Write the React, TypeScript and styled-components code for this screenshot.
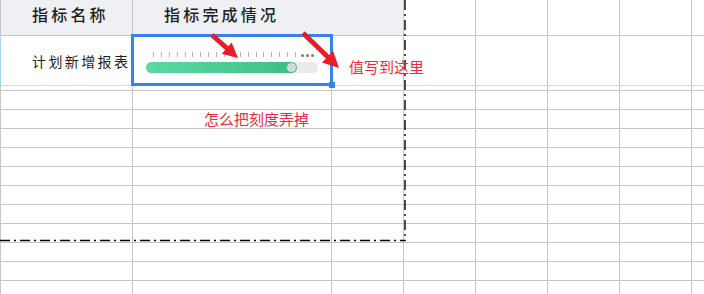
import styled, { createGlobalStyle } from "styled-components";

const GlobalStyle = createGlobalStyle`
  html, body {
    margin: 0;
    padding: 0;
    background: #fff;
    overflow: hidden;
  }
  body {
    font-family: "Noto Sans CJK SC", "Noto Sans", sans-serif;
  }
`;

const EXTRA_COLS = 5;
const TOTAL_COLS = 8;
const BODY_ROWS = 11;
const TICKS = 19;
const PROGRESS = 88;

type Pt = [number, number];

// 箭头多边形 (尾 -> 尖)
const arrowPoints = (from: Pt, to: Pt, headLen: number, headHalf: number, shaftHalf: number) => {
  const dx = to[0] - from[0];
  const dy = to[1] - from[1];
  const len = Math.hypot(dx, dy);
  const ux = dx / len;
  const uy = dy / len;
  const nx = -uy;
  const ny = ux;
  const bx = to[0] - ux * headLen;
  const by = to[1] - uy * headLen;
  const p = (x: number, y: number) => `${x.toFixed(1)},${y.toFixed(1)}`;
  return [
    p(from[0] + nx * shaftHalf, from[1] + ny * shaftHalf),
    p(bx + nx * shaftHalf, by + ny * shaftHalf),
    p(bx + nx * headHalf, by + ny * headHalf),
    p(to[0], to[1]),
    p(bx - nx * headHalf, by - ny * headHalf),
    p(bx - nx * shaftHalf, by - ny * shaftHalf),
    p(from[0] - nx * shaftHalf, from[1] - ny * shaftHalf),
  ].join(" ");
};

const App = () => {
  return (
    <Page>
      <GlobalStyle />
      <Sheet>
        <Cell $first $head>
          <HeadText>指标名称</HeadText>
        </Cell>
        <Cell $head $span={2}>
          <HeadText>指标完成情况</HeadText>
        </Cell>
        {Array.from({ length: EXTRA_COLS }).map((_, i) => (
          <Cell key={`h${i}`} />
        ))}

        <Cell $first $marked $soft>
          <NameText>计划新增报表</NameText>
        </Cell>
        <Cell $soft>
          <ProgressBox>
            <Ticks>
              {Array.from({ length: TICKS }).map((_, i) => (
                <Tick key={i} />
              ))}
              <Dots>
                <Dot />
                <Dot />
                <Dot />
              </Dots>
            </Ticks>
            <Track>
              <Fill style={{ width: `${PROGRESS}%` }}>
                <Knob />
              </Fill>
            </Track>
          </ProgressBox>
          <Selection>
            <Handle />
          </Selection>
        </Cell>
        {Array.from({ length: TOTAL_COLS - 2 }).map((_, i) => (
          <Cell key={`r${i}`} $soft />
        ))}

        {Array.from({ length: TOTAL_COLS }).map((_, i) => (
          <Cell key={`s${i}`} $first={i === 0} />
        ))}

        {Array.from({ length: BODY_ROWS * TOTAL_COLS }).map((_, i) => (
          <Cell key={`b${i}`} $first={i % TOTAL_COLS === 0} />
        ))}
      </Sheet>

      <Marks width="704" height="294" viewBox="0 0 704 294">
        <line x1="405" y1="0" x2="405" y2="240.5" stroke="#000" strokeWidth="1.4" strokeDasharray="10 4 2 4" />
        <line x1="0" y1="240.5" x2="405.7" y2="240.5" stroke="#000" strokeWidth="1.4" strokeDasharray="10 4 2 4" />
        <polygon points={arrowPoints([212, 35], [238, 58], 15, 7.5, 2.4)} fill="#e91d25" />
        <polygon points={arrowPoints([303, 33], [339, 68], 16, 8, 2.4)} fill="#e91d25" />
      </Marks>

      <Note $x={349} $y={58}>值写到这里</Note>
      <Note $x={204} $y={110}>怎么把刻度弄掉</Note>
    </Page>
  );
};

export default App;

const Page = styled.div`
  position: relative;
  width: 704px;
  height: 294px;
  overflow: hidden;
  background: #fff;
`;

const Sheet = styled.div`
  display: grid;
  grid-template-columns: 133px 199px repeat(6, 72px);
  grid-template-rows: 36px 50px 5px repeat(${BODY_ROWS}, 19px);
`;

const Cell = styled.div<{ $head?: boolean; $span?: number; $first?: boolean; $marked?: boolean; $soft?: boolean }>`
  position: relative;
  box-sizing: border-box;
  display: flex;
  align-items: center;
  grid-column: span ${p => p.$span ?? 1};
  background: ${p => (p.$head ? "#eef0f3" : "#fff")};
  border-right: 1px solid #c6c6c6;
  border-bottom: 1px solid ${p => (p.$soft ? "#d9d9d9" : "#c6c6c6")};
  border-left: ${p => (p.$first ? `1px solid ${p.$marked ? "#a9d6f2" : "#c6c6c6"}` : "none")};
  ${p => p.$head && "align-items: flex-start;"}
`;

const HeadText = styled.span`
  padding: 4px 0 0 31px;
  font-size: 16px;
  line-height: 20px;
  font-weight: 500;
  letter-spacing: 3.2px;
  color: #1e1e1e;
  white-space: nowrap;
`;

const NameText = styled.span`
  padding-left: 31px;
  font-size: 14px;
  letter-spacing: 2.4px;
  color: #1e1e1e;
  white-space: nowrap;
`;

const ProgressBox = styled.div`
  align-self: flex-start;
  display: flex;
  flex-direction: column;
  gap: 5px;
  padding: 16px 0 0 13px;
`;

const Ticks = styled.div`
  display: flex;
  align-items: flex-end;
  gap: 6.9px;
  height: 5px;
  padding-left: 7px;
`;

const Tick = styled.span`
  width: 1px;
  height: 5px;
  background: #b4b4b4;
`;

const Dots = styled.span`
  display: flex;
  gap: 2px;
  margin-left: -1.5px;
`;

const Dot = styled.span`
  width: 3px;
  height: 3px;
  border-radius: 50%;
  background: #7c7c7c;
`;

const Track = styled.div`
  position: relative;
  width: 172px;
  height: 11px;
  border-radius: 6px;
  background: #ebebeb;
`;

const Fill = styled.div`
  position: relative;
  height: 100%;
  border-radius: 6px;
  background: linear-gradient(90deg, #5cd9a2, #3bbf85);
`;

const Knob = styled.span`
  position: absolute;
  right: 1px;
  top: 1px;
  width: 9px;
  height: 9px;
  box-sizing: border-box;
  border-radius: 50%;
  background: #d6d6d6;
  border: 1px solid #e6e6e6;
`;

const Selection = styled.div`
  position: absolute;
  top: -2px;
  left: -2px;
  right: -2px;
  bottom: -1px;
  border: 3px solid #3584ee;
  z-index: 1;
  pointer-events: none;
`;

const Handle = styled.span`
  position: absolute;
  right: -5px;
  bottom: -5px;
  width: 6px;
  height: 6px;
  background: #3584ee;
`;

const Marks = styled.svg`
  position: absolute;
  left: 0;
  top: 0;
  z-index: 2;
  pointer-events: none;
`;

const Note = styled.span<{ $x: number; $y: number }>`
  position: absolute;
  left: ${p => p.$x}px;
  top: ${p => p.$y}px;
  z-index: 3;
  font-size: 15px;
  line-height: 18px;
  color: #ef2b3b;
  white-space: nowrap;
`;
